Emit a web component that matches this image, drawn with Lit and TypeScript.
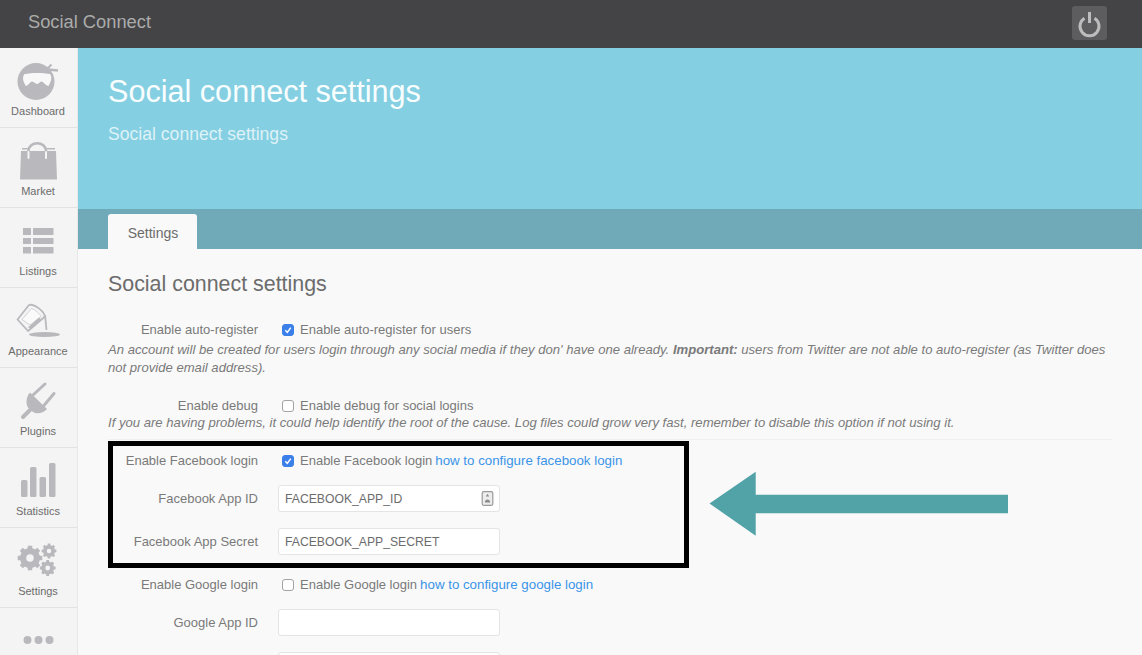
import { html, svg, css, LitElement } from 'lit';
import { customElement } from 'lit/decorators.js';

const GREY = '#b9b9bd';

/** Closed gear outline with a round hole, drawn with even-odd fill. */
function gear(cx: number, cy: number, r: number, teeth: number) {
  const points: string[] = [];
  const outer = r;
  const inner = r * 0.8;
  const step = (Math.PI * 2) / teeth;
  for (let i = 0; i < teeth; i++) {
    const a = i * step;
    [
      [inner, a - step * 0.5],
      [inner, a - step * 0.3],
      [outer, a - step * 0.22],
      [outer, a + step * 0.22],
      [inner, a + step * 0.3],
    ].forEach(([rad, ang]) => {
      points.push(`${(cx + rad * Math.cos(ang)).toFixed(2)} ${(cy + rad * Math.sin(ang)).toFixed(2)}`);
    });
  }
  const hole = r * 0.3;
  const d = `M${points.join('L')}Z M${cx - hole} ${cy}a${hole} ${hole} 0 1 0 ${hole * 2} 0a${hole} ${hole} 0 1 0 ${-hole * 2} 0Z`;
  return svg`<path d=${d} fill=${GREY} fill-rule="evenodd" />`;
}

const icons = {
  dashboard: svg`
    <circle cx="36" cy="21.500" r="18.500" fill=${GREY} />
    <path d="M24.500 14C32 12.500 43 12.500 50 14C52.500 17 51 22 48.500 26C46 26 44 22 41.500 21.500C39.500 22 38.500 24 37 24C35.500 24 34 21.500 32 21.500C29.500 22 28 26 26 26C23 22 22 17 24.500 14Z" fill="#f8f8f8" />
    <path d="M46.500 9.500L51.500 4.500" stroke=${GREY} stroke-width="2.200" />
    <path d="M47.500 9.500L58 10.500" stroke=${GREY} stroke-width="2.500" />`,
  market: svg`
    <path d="M21 11H56L57 39.500H20Z" fill=${GREY} />
    <path d="M22 8.700H30M47 8.700H55" stroke=${GREY} stroke-width="1.600" />
    <path d="M28.500 11.500C28.500 0.500 46 0.500 46 11.500" fill="none" stroke=${GREY} stroke-width="2.500" />
    <path d="M28.500 12V18M46 12V18" stroke="#f4f4f4" stroke-width="2" stroke-linecap="round" />`,
  listings: svg`
    <g fill=${GREY}>
      <rect x="23" y="8" width="8" height="7" />
      <rect x="33" y="8" width="20.500" height="7" />
      <rect x="23" y="18" width="8" height="6" />
      <rect x="33" y="18" width="20.500" height="6" />
      <rect x="23" y="27" width="8" height="6.500" />
      <rect x="33" y="27" width="20.500" height="6.500" />
    </g>`,
  appearance: svg`
    <path d="M17.500 19.500L29 5C34 3.500 44 11 45 16.500L28 31Z" fill="#f4f4f4" stroke=${GREY} stroke-width="1.800" stroke-linejoin="round" />
    <path d="M22 19.500L31.500 8.500C35 9.500 40 14 41 16.500L30 25Z" fill="#fafafa" stroke="#d2d2d5" stroke-width="1" />
    <path d="M28 27.500L39 17.500L41 19.500L31 28.500Z" fill=${GREY} />
    <path d="M45 15L46.500 30" stroke=${GREY} stroke-width="1.800" />
    <ellipse cx="44.500" cy="34.500" rx="15.500" ry="2.600" fill=${GREY} />`,
  plugins: svg`
    <g fill=${GREY}>
      <path d="M33 15L45 4M43.500 26L54 13.500" stroke=${GREY} stroke-width="3" stroke-linecap="round" />
      <path d="M30 12.500L47 29C43 33.500 36.500 34.500 33 32L28 27.500C25.500 24 26 17 30 12.500Z" />
      <path d="M30 30L23 37" stroke=${GREY} stroke-width="4" stroke-linecap="round" />
    </g>`,
  statistics: svg`
    <g fill=${GREY}>
      <rect x="21" y="20" width="6.500" height="17" rx="1.500" />
      <rect x="30" y="7" width="6.500" height="30" rx="1.500" />
      <rect x="39.500" y="17" width="6.500" height="20" rx="1.500" />
      <rect x="49" y="3" width="6.500" height="34" rx="1.500" />
    </g>`,
  settings: svg`${gear(30, 18, 12.500, 8)}${gear(49, 11, 7.500, 8)}${gear(47.700, 28, 8, 8)}`,
  more: svg`
    <g fill=${GREY}>
      <circle cx="27.500" cy="20" r="4" />
      <circle cx="38.500" cy="20" r="4" />
      <circle cx="49.500" cy="20" r="4" />
    </g>`,
};

const navItems: [keyof typeof icons, string][] = [
  ['dashboard', 'Dashboard'],
  ['market', 'Market'],
  ['listings', 'Listings'],
  ['appearance', 'Appearance'],
  ['plugins', 'Plugins'],
  ['statistics', 'Statistics'],
  ['settings', 'Settings'],
  ['more', ''],
];

@customElement('app-root')
export class AppRoot extends LitElement {
  static styles = css`
    :host {
      display: block;
      height: 655px;
      overflow: hidden;
      font-family: 'Liberation Sans', Arial, sans-serif;
      font-size: 13px;
      color: #7a7a7a;
      background: #f9f9f9;
    }

    .topbar {
      height: 48px;
      box-sizing: border-box;
      padding: 0 35px 0 28px;
      background: #444446;
      display: flex;
      align-items: center;
      justify-content: space-between;
    }

    .brand {
      font-size: 18.3px;
      color: #ababab;
      margin-top: -4px;
    }

    .power {
      width: 35px;
      height: 34px;
      margin-top: -3px;
      border-radius: 3px;
      background: #5d5d5f;
    }

    .power svg {
      display: block;
    }

    .layout {
      display: flex;
      align-items: flex-start;
    }

    .sidebar {
      width: 78px;
      height: 607px;
      flex: none;
      box-sizing: border-box;
      overflow: hidden;
      background: #f4f4f4;
      border-right: 1px solid #e8e8e8;
    }

    .nav-item {
      height: 80px;
      box-sizing: border-box;
      padding: 12px 1px 0 0;
      border-bottom: 1px solid #e2e2e2;
      text-align: center;
      font-size: 11px;
      line-height: 14px;
      color: #6c6c6c;
    }

    .nav-item svg {
      display: block;
      width: 78px;
      height: 44px;
    }

    .main {
      flex: 1;
      min-width: 0;
    }

    .hero {
      height: 161px;
      box-sizing: border-box;
      padding: 25px 30px 0;
      background: #85cfe2;
      color: #fff;
    }

    .hero h1 {
      margin: 0;
      font-size: 30.6px;
      line-height: 36px;
      font-weight: 400;
      color: #f8fdfe;
    }

    .hero p {
      margin: 13px 0 0;
      font-size: 17.6px;
      line-height: 24px;
      color: #def2f7;
    }

    .tabs {
      height: 40px;
      box-sizing: border-box;
      padding: 5px 30px 0;
      background: #70a9b8;
    }

    .tab {
      width: 89px;
      height: 35px;
      box-sizing: border-box;
      padding-left: 1px;
      border-radius: 3px 3px 0 0;
      background: #f9f9f9;
      font-size: 14px;
      line-height: 38px;
      text-align: center;
      color: #6c6c6c;
    }

    .content {
      padding: 23px 30px 0;
    }

    h2 {
      margin: 0 0 23px;
      font-size: 21.4px;
      line-height: 25px;
      font-weight: 400;
      color: #6c6c6c;
    }

    .row {
      display: grid;
      grid-template-columns: 150px 222px;
      column-gap: 20px;
      align-items: center;
      min-height: 20px;
    }

    .label {
      text-align: right;
      line-height: 20px;
    }

    .control {
      display: flex;
      align-items: center;
      white-space: nowrap;
      margin-left: 3.5px;
      line-height: 20px;
    }

    .control a {
      font-size: 13.3px;
      color: #3a94e8;
      text-decoration: none;
      margin-left: 3px;
    }

    .check {
      width: 12px;
      height: 12px;
      flex: none;
      box-sizing: border-box;
      margin-right: 6.5px;
      border: 1px solid #a2a2a2;
      border-radius: 3px;
      background: #fff;
    }

    .check.on {
      border-color: #3b7fe8;
      background: #3b7fe8;
    }

    .check svg {
      display: block;
      width: 10px;
      height: 10px;
    }

    .help {
      margin: 1px 0 0;
      font-style: italic;
      font-size: 13.1px;
      line-height: 18px;
      color: #7a7a7a;
    }

    .help.tight {
      margin-top: -2px;
    }

    .divider {
      margin-top: 7px;
      border-top: 1px solid #f0f0f0;
    }

    .gap-20 {
      margin-top: 20px;
    }

    .gap-19 {
      margin-top: 19px;
    }

    .gap-14 {
      margin-top: 14px;
    }

    .gap-16 {
      margin-top: 16px;
    }

    .gap-11 {
      margin-top: 11px;
    }

    .field {
      position: relative;
      height: 27px;
    }

    input {
      display: block;
      width: 100%;
      height: 100%;
      box-sizing: border-box;
      padding: 0 6px;
      border: 1px solid #e4e4e4;
      border-radius: 3px;
      outline: none;
      background: #fff;
      font: inherit;
      font-size: 12.2px;
      color: #6c6c6c;
    }

    .autofill {
      position: absolute;
      top: 6px;
      right: 6px;
    }

    .facebook {
      position: relative;
    }

    .highlight {
      position: absolute;
      top: -10px;
      left: 0;
      width: 581px;
      height: 127px;
      box-sizing: border-box;
      border: 5px solid #000;
      pointer-events: none;
    }

    .arrow {
      position: absolute;
      left: 0;
      top: 0;
      pointer-events: none;
    }
  `;

  private renderCheck(checked: boolean) {
    return html`<span class="check ${checked ? 'on' : ''}">
      ${checked
        ? html`<svg viewBox="0 0 10 10"><path d="M2.300 5.300L4.300 7.400L7.800 2.600" fill="none" stroke="#fff" stroke-width="1.500" /></svg>`
        : ''}
    </span>`;
  }

  protected render() {
    return html`
      <header class="topbar">
        <div class="brand">Social Connect</div>
        <div class="power">
          <svg width="35" height="34" viewBox="0 0 35 34">
            <path d="M12.500 12.200A9.500 9.500 0 1 0 22.500 12.200" fill="none" stroke="#bdbdbd" stroke-width="3" />
            <path d="M17.500 6V17" stroke="#bdbdbd" stroke-width="3" />
          </svg>
        </div>
      </header>
      <div class="layout">
        <nav class="sidebar">
          ${navItems.map(
            ([icon, label]) => html`
              <div class="nav-item">
                <svg viewBox="0 0 78 44">${icons[icon]}</svg>
                ${label}
              </div>
            `,
          )}
        </nav>
        <main class="main">
          <section class="hero">
            <h1>Social connect settings</h1>
            <p>Social connect settings</p>
          </section>
          <div class="tabs"><div class="tab">Settings</div></div>
          <section class="content">
            <h2>Social connect settings</h2>

            <div class="row">
              <div class="label">Enable auto-register</div>
              <div class="control">${this.renderCheck(true)}Enable auto-register for users</div>
            </div>
            <p class="help">
              An account will be created for users login through any social media if they don' have one already.
              <b>Important:</b> users from Twitter are not able to auto-register (as Twitter does not provide email
              address).
            </p>

            <div class="row gap-19">
              <div class="label">Enable debug</div>
              <div class="control">${this.renderCheck(false)}Enable debug for social logins</div>
            </div>
            <p class="help tight">
              If you are having problems, it could help identify the root of the cause. Log files could grow very
              fast, remember to disable this option if not using it.
            </p>
            <div class="divider"></div>

            <div class="facebook gap-11">
              <div class="row">
                <div class="label">Enable Facebook login</div>
                <div class="control">
                  ${this.renderCheck(true)}Enable Facebook login
                  <a href="#">how to configure facebook login</a>
                </div>
              </div>
              <div class="row gap-14">
                <div class="label">Facebook App ID</div>
                <div class="field">
                  <input .value=${'FACEBOOK_APP_ID'} />
                  <svg class="autofill" width="13" height="15" viewBox="0 0 13 15">
                    <rect x="1.200" y="0.700" width="10.600" height="13.600" rx="1.500" fill="#ececec" stroke="#9a9a9a" stroke-width="1.200" />
                    <path d="M6.500 3.300V5M5 5H8" stroke="#8a8a8a" stroke-width="1.200" />
                    <path d="M3.800 11.500C3.800 7.500 9.200 7.500 9.200 11.500Z" fill="#8a8a8a" />
                  </svg>
                </div>
              </div>
              <div class="row gap-16">
                <div class="label">Facebook App Secret</div>
                <div class="field"><input .value=${'FACEBOOK_APP_SECRET'} /></div>
              </div>
              <div class="highlight"></div>
            </div>

            <div class="row gap-20">
              <div class="label">Enable Google login</div>
              <div class="control">
                ${this.renderCheck(false)}Enable Google login
                <a href="#">how to configure google login</a>
              </div>
            </div>
            <div class="row gap-14">
              <div class="label">Google App ID</div>
              <div class="field"><input /></div>
            </div>
            <div class="row gap-16">
              <div class="label"></div>
              <div class="field"><input /></div>
            </div>
          </section>
        </main>
      </div>
      <svg class="arrow" width="1142" height="655" viewBox="0 0 1142 655">
        <path d="M709.500 503.500L755.700 471.700V494.700H1008V513.300H755.700V535.700Z" fill="#52a3a8" />
      </svg>
    `;
  }
}
